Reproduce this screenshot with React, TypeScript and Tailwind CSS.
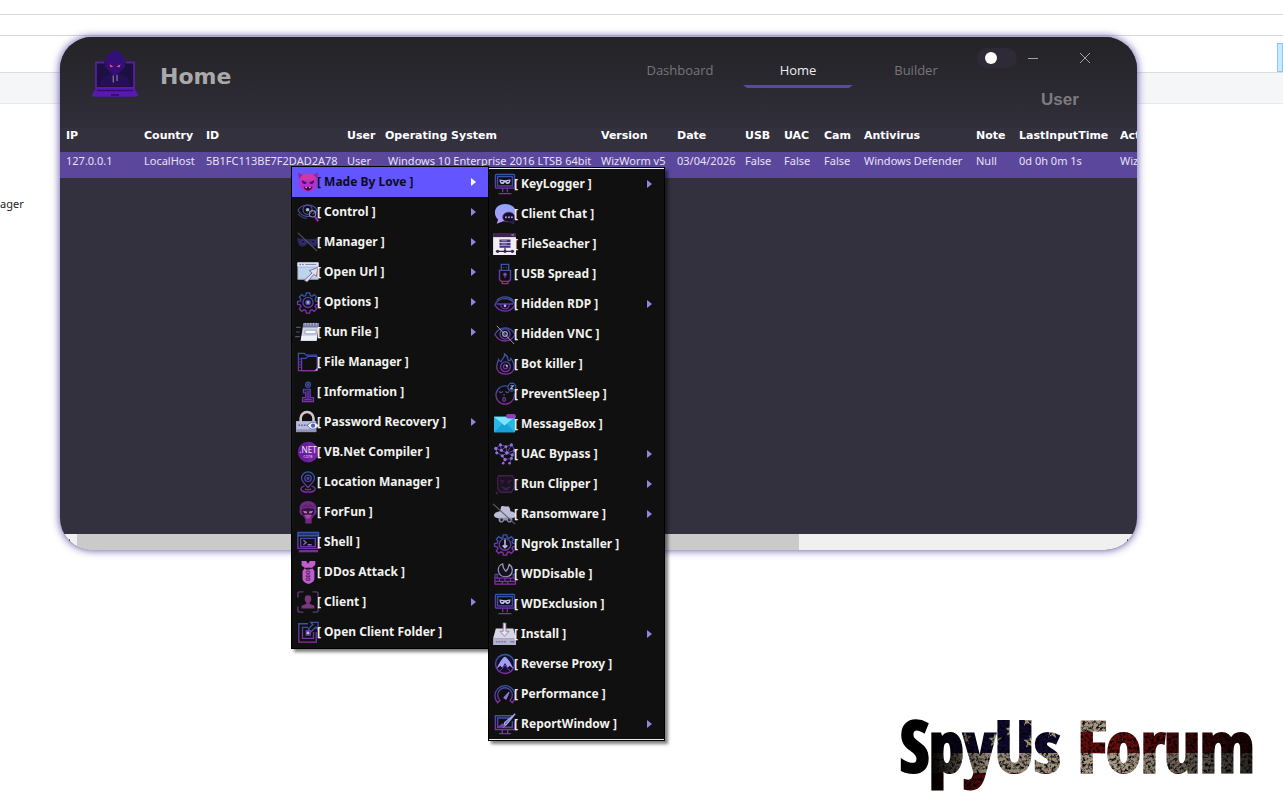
import type { ReactNode } from 'react'

type MenuEntry = { label: string; icon: ReactNode; sub?: boolean; active?: boolean }

const NEON = 'url(#neon)'

const MonitorMask = (
  <g stroke={NEON} fill="none" strokeWidth="1.3">
    <rect x="1.5" y="1.5" width="21" height="15" rx="1" fill="#1b1c4a" />
    <path d="M4 4h16v10H4z" fill="#0d0e22" />
    <path d="M9.5 17v4M14.500 17v4M5 22.500h14" />
    <path d="M6 7l6 1 6-1c0 3-1 5-3 5-1.500 0-2.500-1-3-2.500-.5 1.500-1.500 2.500-3 2.500-2 0-3-2-3-5z" stroke="none" fill="#c4c2e6" />
    <path d="M7.500 8.500l3 .8c-1 1.500-2.500 1-3-.8zM16.500 8.500l-3 .8c1 1.500 2.500 1 3-.8z" fill="#111" stroke="none" />
  </g>
)

const Gear = 'M10.200 2h3.600l.6 2.900 1.900.8 2.500-1.700 2.600 2.600-1.700 2.500.8 1.900 2.900.6v3l-2.900.6-.8 1.900 1.700 2.500-2.600 2.600-2.500-1.700-1.900.8-.6 2.900h-3.600l-.6-2.900-1.900-.8-2.500 1.700-2.600-2.600 1.700-2.500-.8-1.900-2.900-.6v-3l2.900-.6.8-1.900-1.700-2.500L5.200 4l2.500 1.700 1.900-.8z'

const MAIN_MENU: MenuEntry[] = [
  {
    label: 'Made By Love', sub: true, active: true,
    icon: (
      <g>
        <path d="M1.500 1c-.5 4 0 6 2 8l4-4.500C5 4 2.500 3 1.500 1zM22.500 1c.5 4 0 6-2 8l-4-4.500c2.500-.5 5-1.500 6-3.500z" fill="#a81c92" />
        <circle cx="12" cy="12.800" r="10.200" fill="#b52fd0" />
        <path d="M3 8a10.200 10.200 0 0 1 18 0c-4 3.500-14 3.500-18 0z" fill="#d036a8" />
        <path d="M5.500 10l5 2.500c-.5 1.500-2 2-3.200 1.500-1.300-.5-2-2-1.800-4zM18.500 10l-5 2.500c.5 1.500 2 2 3.200 1.500 1.300-.5 2-2 1.800-4z" fill="#4a1050" />
        <path d="M7 17c3 .7 7 .7 10 0-.5 3-3 4.500-5 4.500S7.500 20 7 17z" fill="#4a0b45" />
        <path d="M9 17.300l.9 1.700.9-1.500zM15 17.300l-.9 1.700-.9-1.500z" fill="#fff" />
      </g>
    ),
  },
  {
    label: 'Control', sub: true,
    icon: (
      <g fill="none" stroke="#5c4ba0" strokeWidth="1.200">
        <path d="M1 10C5 3 17 2 22 10c-1.500 2-3 3.500-5 4.500M1 10c3 5 8 7.500 13 6.500" />
        <circle cx="11.500" cy="9.500" r="5" stroke="#4457a8" />
        <circle cx="11.500" cy="9.500" r="2" fill="#a9b6e8" stroke="none" />
        <circle cx="17" cy="14" r="3.500" stroke="#8d86bd" />
        <path d="M19.500 17l3.500 5" stroke="#9b2fa8" strokeWidth="2.200" />
        <path d="M1 14c3 3 6 5 10 5" stroke="#35457e" />
      </g>
    ),
  },
  {
    label: 'Manager', sub: true,
    icon: (
      <g>
        <path d="M0 7c3 2 7 1 12 2 5-1 9 0 12-2-1 4-1 10-6 10-3 0-4-2-6-4-2 2-3 4-6 4C1 17 1 11 0 7z" fill="#2b2761" />
        <path d="M4 11c2-1 4-.5 5 1-2 1.800-4 1.500-5-1zM20 11c-2-1-4-.5-5 1 2 1.800 4 1.500 5-1z" fill="#0d0d16" stroke="#4f439a" strokeWidth=".7" />
        <path d="M1 2l21 20" stroke="#50505c" strokeWidth="1.300" />
      </g>
    ),
  },
  {
    label: 'Open Url', sub: true,
    icon: (
      <g>
        <rect x=".5" y="1.500" width="23" height="19" rx="1" fill="#b8bee0" />
        <path d="M.5 1.500h23V6H.5z" fill="#dfe4f5" />
        <path d="M2 7.500h20V19H2z" fill="#b9d6ea" />
        <circle cx="3.500" cy="3.800" r=".9" fill="#6574aa" /><circle cx="6.500" cy="3.800" r=".9" fill="#6574aa" />
        <path d="M9 3.800h12" stroke="#8590bc" strokeWidth="1.200" />
        <path d="M8 21l8.500-8-3-2.500L23 7l-2 10-2.500-2.500-7.500 8.500z" fill="#e5dcec" stroke="#65618e" strokeWidth=".9" />
      </g>
    ),
  },
  {
    label: 'Options', sub: true,
    icon: (
      <g fill="none" stroke={NEON} strokeWidth="1.400">
        <path d={Gear} />
        <circle cx="12" cy="12.500" r="5.500" />
        <circle cx="12" cy="12.500" r="2.300" fill="#9ba6e5" stroke="#4752a8" />
      </g>
    ),
  },
  {
    label: 'Run File', sub: true,
    icon: (
      <g>
        <path d="M7 2.500h17l-2.500 19H4z" fill="#cdd2ec" />
        <path d="M7 2.500h17l-.7 4.500H6.300z" fill="#76799f" />
        <path d="M9 2v3M12 2v3M15 2v3M18 2v3M21 2v3" stroke="#b9bdd8" />
        <path d="M9 10h12l-.5 4H8.500z" fill="#fff" stroke="#8488ac" strokeWidth=".8" />
        <path d="M5 16h17l-.7 5.500H4z" fill="#eef0fc" />
        <path d="M-1 7h5M-1 12h4M-2 17h5" stroke="#565568" strokeWidth="1.300" />
      </g>
    ),
  },
  {
    label: 'File Manager',
    icon: (
      <g fill="none" stroke={NEON} strokeWidth="1.300">
        <path d="M21 6V4.500H10l-2-2H1.500v19H20" />
        <path d="M5 21.500V8h5l1.500-2H22v14l-1.500 1.500z" />
        <path d="M3.300 8v11" strokeDasharray="1.500 1.500" />
        <path d="M22.500 18v3.500H19z" fill="#b9a4dc" stroke="none" />
      </g>
    ),
  },
  {
    label: 'Information',
    icon: (
      <g fill="none" stroke={NEON} strokeWidth="1.300">
        <circle cx="12" cy="4" r="2.700" /><circle cx="12" cy="4" r=".8" />
        <path d="M7 9h7.500v9H18v4.500H6V18h3.500v-5H7z" fill="#2c1e58" />
        <path d="M12 11v9M8 20.300h8" />
      </g>
    ),
  },
  {
    label: 'Password Recovery', sub: true,
    icon: (
      <g>
        <path d="M4 12V8a7 7 0 0 1 14 0v4" fill="none" stroke="#d8c5c8" strokeWidth="2.800" />
        <path d="M-1 11h22v12H-1z" fill="#b9bbdc" />
        <path d="M-1 20h22v3H-1z" fill="#8f92bb" />
        <path d="M1.500 15.500h12" stroke="#5d6498" strokeWidth="1.600" strokeDasharray="1.800 1.200" />
        <path d="M11.500 16c3-5 9-5 12 0-3 5-9 5-12 0z" fill="#eef0ff" stroke="#6e74a8" />
        <circle cx="17.500" cy="16" r="2.300" fill="#5460ad" />
      </g>
    ),
  },
  {
    label: 'VB.Net Compiler',
    icon: (
      <g fontFamily="Noto Sans, sans-serif" fontWeight="400" textAnchor="middle">
        <circle cx="12" cy="12" r="11.200" fill="#6a1c9a" />
        <path d="M12 .8a11.200 11.200 0 0 1 0 22.400z" fill="#7423a4" />
        <text x="12" y="13.500" fontSize="9" fill="#f0e2fa">.NET</text>
        <text x="12" y="19" fontSize="5" fill="#d6b9ea">core</text>
      </g>
    ),
  },
  {
    label: 'Location Manager',
    icon: (
      <g fill="none" stroke={NEON} strokeWidth="1.400">
        <path d="M12 18C7 13 5 11 5 8a7 7 0 0 1 14 0c0 3-2 5-7 10z" />
        <circle cx="12" cy="8" r="3.500" /><circle cx="12" cy="8" r="1" />
        <path d="M8 16.500c-6 1.500-5 6.500 4 6.500s10-5 4-6.500" />
        <path d="M8.500 19.500c2 1.200 5 1.200 7 0" />
      </g>
    ),
  },
  {
    label: 'ForFun',
    icon: (
      <g>
        <path d="M3 9c-1-5 3-9 9-9s10 4 9 9c1 3 0 6-2.500 7l-2.500 4v4.500H9V20l-2.500-4C3 15 2 12 3 9z" fill="#702a83" />
        <path d="M5 9c4-1.500 10-1.500 14 0l-.5 5-3.500 4H9l-3.500-4z" fill="#321538" />
        <path d="M6.500 10.500l4.500.9v2H8zM17.500 10.500l-4.500.9v2h3z" fill="#c06fc8" />
        <path d="M7.500 15.500c3-1 6-1 9 0l-3 3.500h-3z" fill="#a548ae" />
        <path d="M5 5l2 2 2.500-3L12 7l2.500-3L17 7l2-2" stroke="#4c1c58" fill="none" />
      </g>
    ),
  },
  {
    label: 'Shell',
    icon: (
      <g fill="none" stroke={NEON} strokeWidth="1.500">
        <path d="M1 1.500h22.500v3.700H1z" fill="#20367a" />
        <path d="M1 5.200V19h22.500V5.200" />
        <path d="M4 8h16v9H4z" />
        <path d="M7 10l3 2.500L7 15M11.500 15h4.500" stroke="#7770bd" />
        <path d="M2 22h21" stroke="#7a2e92" strokeWidth="2.500" />
      </g>
    ),
  },
  {
    label: 'DDos Attack',
    icon: (
      <g>
        <path d="M5 0h5l2 3 2-3h6v4l-4 4H9L5 5z" fill="#c25ccf" />
        <path d="M9 7h7l3 4v8c0 3-3 5-6.500 6C9 24 6 22 6 19v-8z" fill="#c25ccf" />
        <path d="M8.500 8h8" stroke="#211124" strokeWidth="1.200" />
        <text x="0" y="0" transform="translate(14.500 21.500) rotate(-90)" fontFamily="Liberation Sans, sans-serif" fontWeight="700" fontSize="5" fill="#27102b">DDOS</text>
      </g>
    ),
  },
  {
    label: 'Client', sub: true,
    icon: (
      <g fill="none" stroke="#5e3a70" strokeWidth="1.500">
        <path d="M1 7V3q0-2 2-2h4M17 1h4q2 0 2 2v4M1 17v4q0 2 2 2h4M17 23h4q2 0 2-2v-4" />
        <path d="M12 4.500c3 0 4 2 3.500 5-.2 1.500-1 2.500-1.800 3.300V14l5.300 2v3H5v-3l5.300-2v-1.200c-.8-.8-1.600-1.800-1.800-3.300-.5-3 .5-5 3.500-5z" fill="#7b367e" stroke="none" />
      </g>
    ),
  },
  {
    label: 'Open Client Folder',
    icon: (
      <g fill="none" stroke={NEON} strokeWidth="1.400">
        <path d="M12 3H2v20h19V12" />
        <path d="M12 7H6v12h12v-7M10 10.500h4.500v5H10z" />
        <path d="M15 1.500h8v8l-2.700-2.700-5 5-3-3 5-5z" />
        <circle cx="12" cy="13" r="1.700" fill="#b6b5f2" stroke="none" />
      </g>
    ),
  },
]

const LOVE_MENU: MenuEntry[] = [
  { label: 'KeyLogger', sub: true, icon: MonitorMask },
  {
    label: 'Client Chat',
    icon: (
      <g>
        <path d="M12 1C5 1 1 5 1 10.500c0 3 1.500 5.500 3.500 7.500L3 22.500l7-2.500c9 1 14-3.500 14-9.500C24 5 19 1 12 1z" fill="url(#chat)" />
        <path d="M16 10c-4 0-6.500 2.500-6.500 5.500 0 3.500 3.500 5.500 7.500 5l4.500 2-.8-3.500c4-3.500 1.500-9-4.700-9z" fill="#15101d" stroke="#6733a0" strokeWidth=".7" />
        <path d="M13 15.500h.1M16.300 15.500h.1M19.500 15.500h.1" stroke="#a9a3f5" strokeWidth="2" strokeLinecap="round" />
      </g>
    ),
  },
  {
    label: 'FileSeacher',
    icon: (
      <g>
        <path d="M-1 0h25v24H-1z" fill="#f0edf6" />
        <path d="M-1 0h25v4.500H-1z" fill="#41234f" />
        <path d="M19 2.200h3" stroke="#b087c5" strokeWidth="1.300" />
        <path d="M6 7h12v3H6zM6 10.800h12v2.500H6zM6 14h12v2H6z" fill="#443180" />
        <path d="M8 8.500h6M8 12h6" stroke="#a39fcb" />
        <path d="M12 16v3M2 20h20" stroke="#2e2547" strokeWidth="1.300" />
        <circle cx="4" cy="20" r="1.700" fill="#2d2650" /><circle cx="12" cy="20" r="1.700" fill="#2d2650" /><circle cx="20" cy="20" r="1.700" fill="#2d2650" />
      </g>
    ),
  },
  {
    label: 'USB Spread',
    icon: (
      <g fill="none" stroke={NEON} strokeWidth="1.500">
        <path d="M8 8V1.500h8V8M10.500 4.500v1M13.500 4.500v1" />
        <path d="M6 8h12v9c0 2-1 3-3 3H9c-2 0-3-1-3-3z" />
        <path d="M12 16v-5" /><circle cx="12" cy="12.500" r="1.300" fill="#b6a5e1" />
        <path d="M9 20.500v2h6v-2" />
      </g>
    ),
  },
  {
    label: 'Hidden RDP', sub: true,
    icon: (
      <g fill="none" stroke={NEON} strokeWidth="1.400">
        <path d="M1 13C5 4 19 4 23 13 18 22 6 22 1 13z" />
        <path d="M3 12h18M7 12c1 7 9 7 10 0M3 8c5-5 13-5 18 0" />
        <circle cx="12" cy="14" r="1.500" fill="#c4a9ef" stroke="none" />
      </g>
    ),
  },
  {
    label: 'Hidden VNC',
    icon: (
      <g fill="none" stroke={NEON} strokeWidth="1.400">
        <path d="M1 12.500C6 3 18 3 23 12.500 18 22 6 22 1 12.500z" />
        <circle cx="12" cy="12" r="5.500" /><circle cx="12" cy="12" r="2.500" stroke="#a39be0" />
        <path d="M3 3l19 20" stroke="#a8a5bc" strokeWidth="1" />
      </g>
    ),
  },
  {
    label: 'Bot killer',
    icon: (
      <g fill="none" stroke={NEON} strokeWidth="1.400">
        <path d="M5 7c1 2 2 2.500 3 2 1-3 4-4 3.500-8C15 3 15 6 15.500 8c1 1 2.500 0 3-2 2 3 3.500 6 3.500 9 0 5-4 8-9.500 8S3 20 3 15c0-3 1-5 2-8z" />
        <circle cx="12.500" cy="15" r="5.300" /><circle cx="12.500" cy="15" r="2.200" />
        <circle cx="14" cy="14" r="1" fill="#e5d4f8" stroke="none" />
      </g>
    ),
  },
  {
    label: 'PreventSleep',
    icon: (
      <g fill="none" stroke={NEON} strokeWidth="1.300">
        <path d="M15 3.500a10 10 0 1 0 7 8" />
        <path d="M5.500 9c1 2 3 2 4 0M12.500 9c1 2 3 2 4 0M11 12v2" />
        <ellipse cx="11" cy="18" rx="1.500" ry="2" />
        <circle cx="19.500" cy="4.500" r="4.300" stroke="#3f5dab" />
        <path d="M18 3h3l-3 3.500h3" stroke="#98a8e8" />
      </g>
    ),
  },
  {
    label: 'MessageBox',
    icon: (
      <g>
        <path d="M0 4h23v17H0z" fill="#26b7e5" />
        <path d="M0 21l9-9 2.500 2 2.500-2 9 9z" fill="#1aa0d8" />
        <path d="M0 4h23L11.500 13.500z" fill="#7be4fa" />
        <rect x="13" y="1" width="11" height="5" rx="2.500" fill="#8c3fbc" />
      </g>
    ),
  },
  {
    label: 'UAC Bypass', sub: true,
    icon: (
      <g fill="none" stroke="#6b4bb5" strokeWidth="1">
        <path d="M2 6l5-4 6 2 6-2 4 6-3 5-6-2-5 3-6-4zM7 2l1 6 6 3 5-9M2 6l6 2 5-4 1 7M23 8l-9 3M9 14l3 4 7-1 1-4M12 18l-2 4M19 17l-2 5" />
        <g fill="#8f74dd" stroke="none">
          <circle cx="2" cy="6" r="1.800" /><circle cx="7" cy="2" r="1.700" /><circle cx="13" cy="4" r="1.600" /><circle cx="19" cy="2" r="1.700" /><circle cx="22.500" cy="8" r="1.700" />
          <circle cx="20" cy="13" r="1.700" /><circle cx="14" cy="11" r="1.900" /><circle cx="8" cy="8" r="1.700" /><circle cx="9" cy="14" r="1.700" /><circle cx="3" cy="11" r="1.600" />
          <circle cx="12" cy="18" r="1.800" /><circle cx="19" cy="17" r="1.600" />
        </g>
        <circle cx="10" cy="22" r="1.400" fill="#c35ae2" stroke="none" /><circle cx="17" cy="22" r="1.400" fill="#c35ae2" stroke="none" />
      </g>
    ),
  },
  {
    label: 'Run Clipper', sub: true,
    icon: (
      <g fill="none" stroke="#40204c" strokeWidth="1.400">
        <path d="M5 3h15l2 3v10l-3 5H7l-3-4V6z" fill="#1d1222" />
        <path d="M7 8l4 1.500M19 8l-4 1.500M8 11h2M15 11h2M8 15c3 2 7 2 10 0M10 18h6" />
        <path d="M2 21l2 2M2 23l2-2" />
      </g>
    ),
  },
  {
    label: 'Ransomware', sub: true,
    icon: (
      <g>
        <path d="M6.500 9L8 3.500c2-1 4.500 1 7 0 2 0 2.500 3 3 5.500 4 .5 6 2.500 6 4.500 0 2.500-5 3.500-12 3.500S0 16 0 13.500s3-4 6.500-4.500z" fill="#bcbdd6" />
        <path d="M5 16h15v3c-1 3-5 3-6 0h-3c-1 3-5 3-6 0z" fill="#8f91aa" />
        <circle cx="8.300" cy="18.500" r="1.500" fill="#24242c" /><circle cx="16.700" cy="18.500" r="1.500" fill="#24242c" />
        <path d="M-1 1l24 22" stroke="#5c5f74" strokeWidth="1.200" />
      </g>
    ),
  },
  {
    label: 'Ngrok Installer',
    icon: (
      <g fill="none" stroke={NEON} strokeWidth="1.500">
        <path d={Gear} />
        <circle cx="12" cy="12.500" r="6.300" />
        <path d="M12 7v9M9.500 13.500L12 16l2.500-2.500" stroke="#b8b5ef" strokeWidth="1.800" />
      </g>
    ),
  },
  {
    label: 'WDDisable',
    icon: (
      <g fill="none" stroke={NEON} strokeWidth="1.300">
        <path d="M1 12.500h4M20 12.500h3.500V23H1V12.500M1 16.500h22M1 20h22M6 16.500V20M12 16.500V20M18 16.500V20M9 20v3M15 20v3M3.500 13v3M21 13v3" />
        <path d="M9.500 1C2 3 3.500 15 12.500 15 21 15 22 5 16.500 1.500 16 5 15 7 13 9 11 7 9.500 4 9.500 1z" fill="#15121f" stroke="#9b96b8" />
      </g>
    ),
  },
  { label: 'WDExclusion', icon: MonitorMask },
  {
    label: 'Install', sub: true,
    icon: (
      <g>
        <path d="M2 6h19l3 11H-1z" fill="#d9d5e9" />
        <path d="M-1 16.500h25V24H-1z" fill="#b4b2cf" />
        <path d="M2 20.500h12" stroke="#7d7aa5" strokeWidth="1.600" strokeDasharray="2 1" />
        <path d="M18 20.500h4" stroke="#7d7aa5" strokeWidth="1.600" />
        <path d="M10 0h3v9h3.500l-5 5.500-5-5.500H10z" fill="#ece2ea" stroke="#807a96" strokeWidth=".9" />
      </g>
    ),
  },
  {
    label: 'Reverse Proxy',
    icon: (
      <g>
        <circle cx="12" cy="12" r="10.300" fill="#14122b" stroke={NEON} strokeWidth="1.500" />
        <path d="M3 17C5 12 9 5 12 4c3 1 7 8 9 13l-4-3-2 2-3-5-3 5-2-2z" fill="url(#chat)" />
        <path d="M6 20l3-3 3-4 3 4 3 3" fill="none" stroke="#6b41ac" />
      </g>
    ),
  },
  {
    label: 'Performance',
    icon: (
      <g fill="none" stroke={NEON} strokeWidth="1.400">
        <path d="M4 21.500a11 11 0 1 1 16 0l-2.500-2.500a8 8 0 1 0-11 0z" />
        <path d="M11 16l5.500-6-3.500 7.500z" fill="#8c79df" stroke="#8c79df" />
      </g>
    ),
  },
  {
    label: 'ReportWindow', sub: true,
    icon: (
      <g fill="none" stroke={NEON} strokeWidth="1.500">
        <path d="M20 3H1.500v15h21V9" /><path d="M17 5.500H4v10h16V9" />
        <path d="M9 18v4M15 18v4M5.500 22.500h13" />
        <path d="M23 1l-9 11-3 2.500.7-4z" stroke="#9fa6e8" fill="#4450a0" />
        <path d="M10 12c-2 0-2 2-4 2.500 2 1 5 .5 5-1.500" fill="#9a62d0" />
      </g>
    ),
  },
]

const COLUMNS = [
  { head: 'IP', value: '127.0.0.1', width: 'w-[78px]' },
  { head: 'Country', value: 'LocalHost', width: 'w-[62px]' },
  { head: 'ID', value: '5B1FC113BE7F2DAD2A78', width: 'w-[141px]' },
  { head: 'User', value: 'User', width: 'w-[38px]' },
  { head: 'Operating System', value: 'Windows 10 Enterprise 2016 LTSB 64bit', width: 'w-[216px]', indent: true },
  { head: 'Version', value: 'WizWorm v5', width: 'w-[76px]' },
  { head: 'Date', value: '03/04/2026', width: 'w-[68px]' },
  { head: 'USB', value: 'False', width: 'w-[39px]' },
  { head: 'UAC', value: 'False', width: 'w-[40px]' },
  { head: 'Cam', value: 'False', width: 'w-[40px]' },
  { head: 'Antivirus', value: 'Windows Defender', width: 'w-[112px]' },
  { head: 'Note', value: 'Null', width: 'w-[43px]' },
  { head: 'LastInputTime', value: '0d 0h 0m 1s', width: 'w-[101px]' },
  { head: 'Act', value: 'Wiz', width: '' },
]

const TABS = ['Dashboard', 'Home', 'Builder']

function SharedGradients() {
  return (
    <svg className="absolute size-0" aria-hidden="true">
      <defs>
        <linearGradient id="neon" gradientUnits="userSpaceOnUse" x1="0" y1="1" x2="0" y2="23">
          <stop offset="0" stopColor="#3158a8" />
          <stop offset="0.5" stopColor="#5940a5" />
          <stop offset="1" stopColor="#8c2ca6" />
        </linearGradient>
        <linearGradient id="chat" x1="0" y1="0" x2="0" y2="1">
          <stop offset="0" stopColor="#8ea5fb" />
          <stop offset="1" stopColor="#b49af5" />
        </linearGradient>
      </defs>
    </svg>
  )
}

function HackerLogo() {
  return (
    <svg viewBox="0 0 46 48" className="h-12 w-[46px]" aria-hidden="true">
      <path d="M4 14v25h38V14h-7M11 14H4" fill="#1b1040" />
      <path d="M12 13.500H4V39h38V13.500h-8" fill="none" stroke="#571ea6" strokeWidth="1.800" />
      <path d="M7 37c2-9 7-11 12-12h8c5 1 10 3 12 12z" fill="#260f55" />
      <path d="M23 1c-6 3-10 7-10 13 0 4 1 5 2 6l6 6h4l6-6c1-1 2-2 2-6 0-6-4-10-10-13z" fill="#31107a" />
      <path d="M16 14c3-2 11-2 14 0 0 5-3 9-7 10-4-1-7-5-7-10z" fill="#3c0c77" />
      <path d="M17.500 15.500l4 2-3 .8zM28.500 15.500l-4 2 3 .8z" fill="#f05b92" />
      <path d="M21.300 26.500v7M25 26v6" stroke="#85749e" strokeWidth="1.300" />
      <path d="M4 39h38l4 6.500c0 1.300-1 2.300-2.500 2.300h-41C1 47.800 0 46.800 0 45.500z" fill="#5a18b0" />
      <path d="M5 41.500h36" stroke="#2d1168" strokeWidth="1.500" />
      <path d="M19 46h8" stroke="#27105c" strokeWidth="1.500" />
    </svg>
  )
}

function MenuItem({ entry }: { entry: MenuEntry }) {
  return (
    <button
      type="button"
      role="menuitem"
      aria-haspopup={entry.sub ? 'menu' : undefined}
      className={`flex h-[30px] w-full items-center pl-[5px] pr-3 text-left text-[12px] font-bold whitespace-nowrap
        ${entry.active ? 'bg-[#6355ff] text-[#0c0c1c]' : 'text-[#f2f2ee] hover:bg-[#26243a]'}`}
    >
      <svg viewBox="0 0 24 24" className="size-[22px] shrink-0 overflow-visible" aria-hidden="true">{entry.icon}</svg>
      <span className="-ml-0.5">[ {entry.label} ]</span>
      {entry.sub && (
        <svg viewBox="0 0 5 8" className={`ml-auto h-2 w-[5px] ${entry.active ? 'text-white' : 'text-[#9385da]'}`} aria-hidden="true">
          <path d="M0 0l5 4-5 4z" fill="currentColor" />
        </svg>
      )}
    </button>
  )
}

// Browser window behind the app
function Backdrop() {
  return (
    <div className="absolute inset-0 flex flex-col font-['Noto_Sans',sans-serif] text-[11px]">
      <div className="h-[15px] border-b border-[#d9d9d9]" />
      <div className="h-[21px] border-b border-[#d9d9d9]" />
      <div className="flex h-[37px] items-end justify-end border-b border-[#dcdcdc]">
        <div className="h-[29px] w-1.5 border border-[#8fc6ee] bg-[#cce8ff]" />
      </div>
      <div className="h-[31px] border-b border-[#e8e8ea] bg-[#f5f6f7]" />
      <div className="pt-[92px] leading-4 text-[#1a1a1a]">ager</div>
    </div>
  )
}

function ForumLogo() {
  return (
    <svg viewBox="0 0 370 104" className="h-[104px] w-[370px]" role="img" aria-label="SpyUs Forum">
      <defs>
        <filter id="grime" x="0" y="0" width="1" height="1">
          <feTurbulence type="fractalNoise" baseFrequency="0.35" numOctaves="3" seed="8" />
          <feColorMatrix values="0 0 0 0 0  0 0 0 0 0  0 0 0 0 0  3 0 0 0 -1.300" />
        </filter>
        <linearGradient id="fade" x1="0" x2="1" y1="0" y2="0">
          <stop offset="0" stopColor="#000" />
          <stop offset="0.1" stopColor="#000" stopOpacity="0.95" />
          <stop offset="0.24" stopColor="#000" stopOpacity="0.2" />
          <stop offset="0.6" stopColor="#000" stopOpacity="0.05" />
          <stop offset="0.8" stopColor="#000" stopOpacity="0.5" />
          <stop offset="1" stopColor="#000" stopOpacity="0.85" />
        </linearGradient>
        <pattern id="flag" patternUnits="userSpaceOnUse" width="370" height="104">
          <path d="M0 0h370v104H0z" fill="#6a0d0d" />
          <path d="M180 22h190v20H180zM0 63h370v20H0z" fill="#b3a48f" />
          <path d="M0 0h180v63H0z" fill="#120b38" />
          <g fill="#c4b598">
            {[[52, 32], [68, 48], [83, 34], [98, 50], [114, 40], [131, 30], [133, 52], [155, 42], [168, 54]].map(([x, y]) => (
              <path key={`${x}-${y}`} transform={`translate(${x} ${y})`} d="M0-7l1.700 4.800h5L2.700 1l1.500 5L0 3l-4.200 3 1.500-5-4-3.200h5z" />
            ))}
          </g>
          <path d="M0 0h370v104H0z" filter="url(#grime)" />
          <path d="M0 0h370v104H0z" fill="url(#fade)" />
        </pattern>
      </defs>
      <text
        x="3"
        y="82"
        fill="url(#flag)"
        stroke="url(#flag)"
        strokeWidth="3"
        fontSize="70"
        fontWeight="900"
        fontFamily="Impact, 'Noto Sans ExtraCondensed', 'Open Sans Condensed', 'Roboto Condensed', 'Liberation Sans Narrow', 'Liberation Sans', sans-serif"
      >
        SpyUs Forum
      </text>
    </svg>
  )
}

function AppWindow() {
  return (
    <section className="overflow-hidden rounded-[32px] bg-[#34313f] shadow-[0_0_8px_#5546a0]">
      <header className="flex h-[91px] items-start bg-linear-to-b from-[#242326] to-[#302e3a]">
        <div className="flex items-end gap-[22px] pt-3 pl-8">
          <HackerLogo />
          <h1 className="pb-1.5 font-['DejaVu_Sans',sans-serif] text-[22px] leading-7 font-bold text-[#a9a9a9]">Home</h1>
        </div>

        <nav className="ml-auto flex items-start gap-2 pt-[22px] font-['Open_Sans',sans-serif] text-[13px]">
          {TABS.map((tab) => (
            <button key={tab} type="button" className={`w-[110px] ${tab === 'Home' ? 'text-[#ededf0]' : 'text-[#77757b]'}`}>
              <span className="block h-[26px] leading-[22px]">{tab}</span>
              {tab === 'Home' && (
                <svg viewBox="0 0 110 3" className="h-[3px] w-full" aria-hidden="true">
                  <path d="M0 0h110l-4 3H4z" fill="#5a4a9c" />
                </svg>
              )}
            </button>
          ))}
        </nav>

        <div className="w-[166px] pt-[7px] pl-1.5">
          <div className="flex items-center">
            <label className="flex">
              <input type="checkbox" role="switch" aria-label="Dark mode" className="peer sr-only" />
              <span className="flex h-5 w-10 items-center rounded-full bg-[#2e2b36] px-2 peer-checked:justify-end">
                <span className="size-3 rounded-full bg-white" />
              </span>
            </label>
            <button type="button" aria-label="Minimize" className="ml-0.5 flex size-7 items-center justify-center">
              <span className="h-px w-2.5 bg-[#a2a1a6]" />
            </button>
            <button type="button" aria-label="Close" className="ml-6 flex size-7 items-center justify-center">
              <svg viewBox="0 0 10 10" className="size-2.5" aria-hidden="true">
                <path d="M0 0l10 10M10 0L0 10" stroke="#a2a1a6" />
              </svg>
            </button>
          </div>
          <p className="pt-4 pl-16 font-['Liberation_Sans',sans-serif] text-[17px] leading-6 font-bold text-[#7d7b80]">User</p>
        </div>
      </header>

      <div className="h-[406px] overflow-hidden">
        <table className="w-full table-fixed text-left whitespace-nowrap">
          <thead className="font-['DejaVu_Sans',sans-serif] text-[11px] text-white">
            <tr className="h-6">
              {COLUMNS.map((c) => (
                <th key={c.head} className={`${c.width} p-0 pb-2 pl-1.5 leading-4 font-bold`}>{c.head}</th>
              ))}
            </tr>
          </thead>
          <tbody className="font-['Noto_Sans',sans-serif] text-[11px] text-[#e6e1f5]">
            <tr className="h-[26px] bg-[#5b479c]">
              {COLUMNS.map((c) => (
                <td key={c.head} className={`p-0 pb-2 leading-4 ${c.indent ? 'pl-[9px]' : 'pl-1.5'}`}>{c.value}</td>
              ))}
            </tr>
          </tbody>
        </table>
      </div>

      {/* Horizontal scrollbar */}
      <div className="flex h-4 items-center bg-[#f0f0f0]">
        <span className="w-[17px] pl-1.5 text-[#333]">
          <svg viewBox="0 0 4 7" className="h-[7px] w-1" aria-hidden="true"><path d="M4 0v7L0 3.500z" fill="currentColor" /></svg>
        </span>
        <div className="h-4 w-[67%] bg-[#cacaca]" />
        <span className="ml-auto pr-1.5 text-[#333]">
          <svg viewBox="0 0 4 7" className="h-[7px] w-1" aria-hidden="true"><path d="M0 0v7l4-3.500z" fill="currentColor" /></svg>
        </span>
      </div>
    </section>
  )
}

export default function App() {
  return (
    <div className="relative flex min-h-screen flex-col overflow-hidden bg-white">
      <SharedGradients />
      <Backdrop />

      <main className="relative pt-[37px] pr-[146px] pl-[60px]">
        <AppWindow />
      </main>

      <footer className="relative mt-auto flex justify-end pr-[16px] pb-2">
        <ForumLogo />
      </footer>

      <div
        role="menu"
        className="absolute top-[166px] left-[291px] w-[198px] border border-black bg-[#101010] pb-px font-['Noto_Sans',sans-serif] shadow-[3px_3px_3px_rgba(0,0,0,0.5)]"
      >
        {MAIN_MENU.map((entry) => <MenuItem key={entry.label} entry={entry} />)}
      </div>

      <div
        role="menu"
        className="absolute top-[167px] left-[488px] w-[177px] border border-black bg-[#101010] font-['Noto_Sans',sans-serif] shadow-[3px_3px_3px_rgba(0,0,0,0.5)]"
      >
        <div className="border-y border-[#f0f0f0]">
          {LOVE_MENU.map((entry) => <MenuItem key={entry.label} entry={entry} />)}
        </div>
      </div>
    </div>
  )
}
